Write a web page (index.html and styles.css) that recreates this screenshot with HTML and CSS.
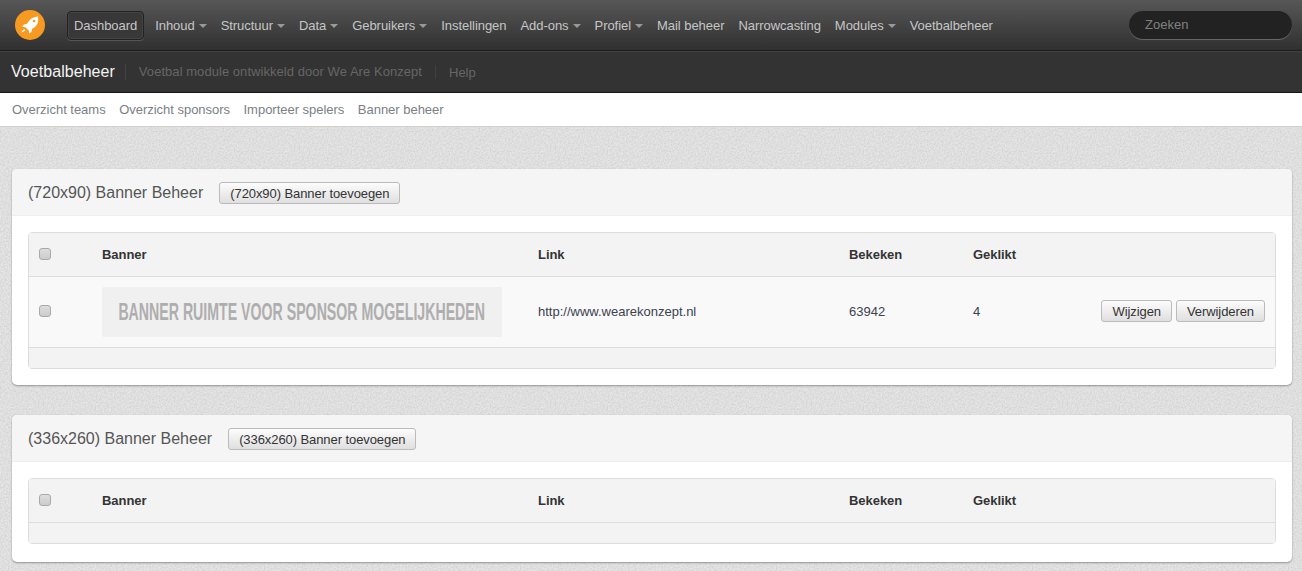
FILE: index.html
```html
<!DOCTYPE html>
<html lang="nl">
<head>
<meta charset="utf-8">
<title>Voetbalbeheer</title>
<link rel="stylesheet" href="styles.css">
</head>
<body>
<header class="topbar">
  <svg class="logo" viewBox="0 0 30 30" width="30" height="30" aria-hidden="true">
    <circle cx="15" cy="15" r="15" fill="#f79a22"/>
    <path d="M23 6.500c-4.200.2-7.300 2-9.600 5.200l-1.500 2.300-3.200.6-1.400 2.200 3.200.4 3.300 3.300.4 3 2.200-1.400.6-3.200 2.300-1.500c3.200-2.300 4.500-5.800 3.700-10.500z" fill="#fff"/>
    <path d="M9.500 19.200c-1.400.4-2.500 1.500-2.900 3.100 1.500-.3 2.800-1.100 3.800-2.200z" fill="#fff"/>
    <circle cx="19" cy="11" r="1.300" fill="#f79a22"/>
  </svg>
  <nav class="mainnav">
    <a class="item active">Dashboard</a>
    <a class="item caret">Inhoud</a>
    <a class="item caret">Structuur</a>
    <a class="item caret">Data</a>
    <a class="item caret">Gebruikers</a>
    <a class="item">Instellingen</a>
    <a class="item caret">Add-ons</a>
    <a class="item caret">Profiel</a>
    <a class="item">Mail beheer</a>
    <a class="item">Narrowcasting</a>
    <a class="item caret">Modules</a>
    <a class="item">Voetbalbeheer</a>
  </nav>
  <div class="search">Zoeken</div>
</header>
<div class="subbar">
  <span class="brand">Voetbalbeheer</span>
  <span class="desc">Voetbal module ontwikkeld door We Are Konzept</span>
  <span class="help">Help</span>
</div>
<nav class="tabs">
  <a>Overzicht teams</a>
  <a>Overzicht sponsors</a>
  <a>Importeer spelers</a>
  <a>Banner beheer</a>
</nav>
<main class="content">
  <section class="panel">
    <div class="panel-head">
      <h2>(720x90) Banner Beheer</h2>
      <button class="btn">(720x90) Banner toevoegen</button>
    </div>
    <div class="panel-body">
      <table class="grid">
        <thead>
          <tr><th class="c-check"><span class="check"></span></th><th class="c-banner">Banner</th><th class="c-link">Link</th><th class="c-views">Bekeken</th><th class="c-clicks">Geklikt</th><th></th></tr>
        </thead>
        <tbody>
          <tr>
            <td class="cell"><span class="check"></span></td>
            <td><div class="banner"><span class="banner-text">BANNER RUIMTE VOOR SPONSOR MOGELIJKHEDEN</span></div></td>
            <td class="cell">http://www.wearekonzept.nl</td>
            <td class="cell">63942</td>
            <td class="cell">4</td>
            <td class="cell actions"><button class="btn">Wijzigen</button><button class="btn">Verwijderen</button></td>
          </tr>
        </tbody>
        <tfoot><tr><td colspan="6"></td></tr></tfoot>
      </table>
    </div>
  </section>
  <section class="panel">
    <div class="panel-head">
      <h2>(336x260) Banner Beheer</h2>
      <button class="btn">(336x260) Banner toevoegen</button>
    </div>
    <div class="panel-body tall">
      <table class="grid">
        <thead>
          <tr><th class="c-check"><span class="check"></span></th><th class="c-banner">Banner</th><th class="c-link">Link</th><th class="c-views">Bekeken</th><th class="c-clicks">Geklikt</th><th></th></tr>
        </thead>
        <tfoot><tr><td colspan="6"></td></tr></tfoot>
      </table>
    </div>
  </section>
</main>
</body>
</html>
```
FILE: styles.css
```css
* { box-sizing: border-box; }
html, body { margin: 0; height: 571px; overflow: hidden; }
body {
  font-family: "Liberation Sans", Arial, sans-serif;
  font-size: 13px;
  color: #333;
  background-color: #e6e6e6;
  background-image: url("data:image/svg+xml,%3Csvg xmlns='http://www.w3.org/2000/svg' width='256' height='256'%3E%3Cfilter id='n' x='0' y='0' width='100%25' height='100%25'%3E%3CfeTurbulence type='fractalNoise' baseFrequency='.6' numOctaves='4' stitchTiles='stitch'/%3E%3CfeColorMatrix values='0 0 0 0 .5 0 0 0 0 .5 0 0 0 0 .5 .8 0 0 0 -.22'/%3E%3C/filter%3E%3Crect width='256' height='256' filter='url(%23n)'/%3E%3C/svg%3E");
}
.topbar {
  height: 51px;
  display: flex;
  align-items: center;
  padding-left: 15px;
  background: linear-gradient(#575757, #303030);
  border-bottom: 1px solid #1c1c1c;
}
.logo { flex: none; margin-right: 22px; }
.mainnav { display: flex; align-items: center; }
.item {
  font-size: 13px;
  letter-spacing: -.05px;
  color: #c6c6c6;
  padding: 0 6px;
  height: 29px;
  line-height: 27px;
  border: 1px solid transparent;
  border-radius: 4px;
  white-space: nowrap;
}
.item.active {
  background: #383838;
  border-color: #222;
  box-shadow: inset 0 0 0 1px #444, 0 1px 0 #555;
  margin-right: 4px;
}
.caret::after {
  content: "";
  display: inline-block;
  margin-left: 4px;
  vertical-align: 2px;
  border-left: 4px solid transparent;
  border-right: 4px solid transparent;
  border-top: 4px solid #999;
}
.search {
  margin-left: auto;
  margin-right: 10px;
  width: 163px;
  height: 28px;
  line-height: 27px;
  padding-left: 16px;
  border-radius: 14px;
  background: #222;
  color: #808080;
  font-size: 13px;
  box-shadow: 0 1px 0 #666;
}
.subbar {
  height: 42px;
  display: flex;
  align-items: center;
  padding-left: 11px;
  background: #333;
  border-top: 1px solid #444;
  border-bottom: 1px solid #161616;
}
.brand { font-size: 16px; letter-spacing: .05px; color: #f4f4f4; padding-right: 10px; border-right: 1px solid #444; line-height: 16px; margin-right: 13px; }
.desc { font-size: 13px; letter-spacing: .05px; color: #666; padding-right: 13px; border-right: 1px solid #3f3f3f; margin-right: 13px; line-height: 14px; }
.help { font-size: 13px; color: #666; }
.tabs {
  height: 34px;
  display: flex;
  align-items: center;
  gap: 13.5px;
  padding-left: 12px;
  background: #fff;
  border-bottom: 1px solid #d0d0d0;
  font-size: 13px;
  letter-spacing: -.02px;
  color: #7b7f85;
}
.content { padding: 42px 10px 0 12px; }
.panel {
  margin-bottom: 30px;
  background: #fff;
  border-radius: 5px;
  box-shadow: 0 1px 2px rgba(0, 0, 0, .35);
}
.panel-head {
  height: 47px;
  display: flex;
  align-items: center;
  gap: 16px;
  padding-left: 16px;
  background: #f5f5f5;
  border-bottom: 1px solid #eee;
  border-radius: 5px 5px 0 0;
}
h2 { margin: 2px 0 0; font-size: 16px; font-weight: 400; color: #555; }
.btn {
  height: 22px;
  padding: 0 10px;
  border: 1px solid #bbb;
  border-radius: 3px;
  background: linear-gradient(#fcfcfc, #dfdfdf);
  color: #333;
  font: 13px "Liberation Sans", Arial, sans-serif;
  letter-spacing: -.08px;
}
.panel-head .btn { margin-top: 2px; }
.panel-body { padding: 16px; }
.panel-body.tall { padding-bottom: 18px; }
.grid {
  width: 100%;
  table-layout: fixed;
  border-collapse: separate;
  border-spacing: 0;
  border: 1px solid #ddd;
  border-radius: 4px;
  background: #f9f9f9;
}
.grid th { height: 44px; text-align: left; font-size: 13px; letter-spacing: -.05px; color: #333; background: #f3f3f3; border-bottom: 1px solid #ddd; padding: 0; }
.grid td { height: 71px; border-bottom: 1px solid #ddd; padding: 0; color: #3c4250; }
.grid td.cell { padding-bottom: 2px; }
.grid tfoot td { height: 20px; background: #f3f3f3; border-bottom: 0; }
.c-check { width: 73px; padding-left: 10px !important; }
.grid td:first-child { padding-left: 10px; }
.grid tfoot td:first-child { padding-left: 0; }
.c-banner { width: 436px; }
.c-link { width: 311px; }
.c-views { width: 124px; }
.c-clicks { width: 120px; }
.check {
  display: block;
  width: 12px;
  height: 12px;
  border: 1px solid #aaa;
  border-radius: 3px;
  background: linear-gradient(#ddd, #ccc);
}
th .check { margin-bottom: 2px; }
.banner {
  display: flex;
  justify-content: center;
  align-items: center;
  width: 400px;
  height: 50px;
  background: #f0f0f0;
  border-radius: 2px;
}
.banner-text {
  flex: none;
  color: #aeaeae;
  font-size: 24px;
  font-weight: 700;
  white-space: nowrap;
  transform: scaleX(.59);
}
.actions { text-align: right; padding-right: 10px !important; }
.actions .btn { margin-left: 4px; }
```
